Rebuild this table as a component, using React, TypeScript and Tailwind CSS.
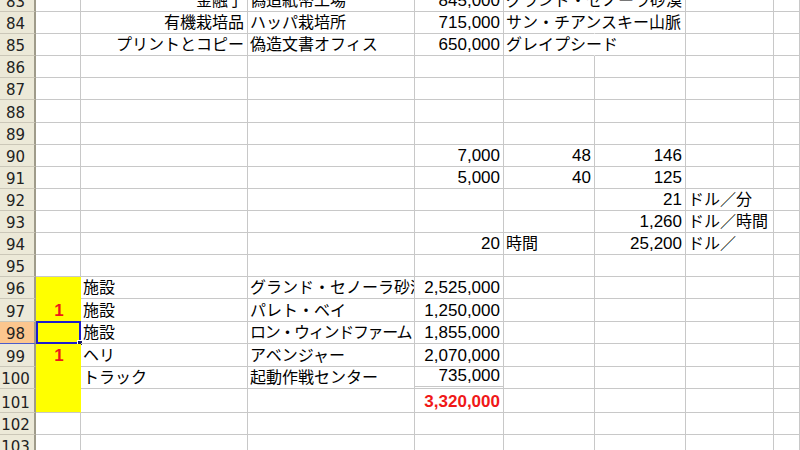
import clsx from "clsx";

// Excel 2003-style sheet, rows 83–103. Cells bottom-aligned like Excel,
// long text spills into the next empty cell, fills hide the gridlines.
type Cell = { t: string; r?: boolean; num?: boolean; cls?: string; spill?: boolean; clip?: boolean };
type Row = { n: number; h: string; cells: Partial<Record<ColKey, Cell>> };
type ColKey = "B" | "C" | "D" | "E" | "F" | "G" | "H" | "I";

const COLS: { key: ColKey; w: string }[] = [
  { key: "B", w: "w-[45px]" },
  { key: "C", w: "w-[167px]" },
  { key: "D", w: "w-[167px]" },
  { key: "E", w: "w-[89px]" },
  { key: "F", w: "w-[91px]" },
  { key: "G", w: "w-[91px]" },
  { key: "H", w: "w-[88px]" },
  { key: "I", w: "flex-1" },
];

const txt = (t: string, extra: Partial<Cell> = {}): Cell => ({ t, ...extra });
const num = (t: string, extra: Partial<Cell> = {}): Cell => ({ t, r: true, num: true, ...extra });

const YELLOW = new Set([96, 97, 98, 99, 100, 101]);

const ROWS: Row[] = [
  { n: 83, h: "h-[22px]", cells: { C: txt("金融了", { r: true }), D: txt("偽造紙幣工場"), E: num("845,000"), F: txt("グランド・セノーラ砂漠", { spill: true }) } },
  { n: 84, h: "h-[22px]", cells: { C: txt("有機栽培品", { r: true }), D: txt("ハッパ栽培所"), E: num("715,000"), F: txt("サン・チアンスキー山脈", { spill: true }) } },
  { n: 85, h: "h-[22px]", cells: { C: txt("プリントとコピー", { r: true }), D: txt("偽造文書オフィス"), E: num("650,000"), F: txt("グレイプシード", { spill: true }) } },
  { n: 86, h: "h-[22px]", cells: {} },
  { n: 87, h: "h-[22px]", cells: {} },
  { n: 88, h: "h-[23px]", cells: {} },
  { n: 89, h: "h-[22px]", cells: {} },
  { n: 90, h: "h-[22px]", cells: { E: num("7,000"), F: num("48"), G: num("146") } },
  { n: 91, h: "h-[22px]", cells: { E: num("5,000"), F: num("40"), G: num("125") } },
  { n: 92, h: "h-[22px]", cells: { G: num("21"), H: txt("ドル／分") } },
  { n: 93, h: "h-[22px]", cells: { G: num("1,260"), H: txt("ドル／時間") } },
  { n: 94, h: "h-[22px]", cells: { E: num("20"), F: txt("時間"), G: num("25,200"), H: txt("ドル／") } },
  { n: 95, h: "h-[22px]", cells: {} },
  { n: 96, h: "h-[22px]", cells: { C: txt("施設"), D: txt("グランド・セノーラ砂漠", { clip: true }), E: num("2,525,000") } },
  { n: 97, h: "h-[23px]", cells: { B: num("1", { r: false, cls: "justify-center font-bold text-[#f01818]" }), C: txt("施設"), D: txt("パレト・ベイ"), E: num("1,250,000") } },
  { n: 98, h: "h-[22px]", cells: { C: txt("施設"), D: txt("ロン・ウィンドファーム", { clip: true, cls: "tracking-[-1.3px]" }), E: num("1,855,000") } },
  { n: 99, h: "h-[23px]", cells: { B: num("1", { r: false, cls: "justify-center font-bold text-[#f01818]" }), C: txt("ヘリ"), D: txt("アベンジャー"), E: num("2,070,000") } },
  { n: 100, h: "h-[22px]", cells: { C: txt("トラック"), D: txt("起動作戦センター"), E: num("735,000", { cls: "border-b-[3px] border-b-[#222] border-double" }) } },
  { n: 101, h: "h-[24px]", cells: { E: num("3,320,000", { cls: "font-bold text-[#f01818]" }) } },
  { n: 102, h: "h-[22px]", cells: {} },
  { n: 103, h: "h-[22px]", cells: {} },
];

function SheetRow({ row }: { row: Row }) {
  const selected = row.n === 98;
  return (
    <div className={clsx("flex", row.h)}>
      <div
        className={clsx(
          "flex w-[36px] shrink-0 items-end justify-center border-r-2 border-b pr-[3px] pb-[1px] font-['DejaVu_Sans',sans-serif] text-[15px] leading-none text-[#222]",
          selected ? "border-r-[#9f9b8a] border-b-[#4a5ccc] bg-[#fcc68e]" : "border-r-[#9f9b8a] border-b-[#cbc7b8] bg-[#ece9d8]"
        )}
      >
        {row.n}
      </div>
      {COLS.map((c) => {
        const cell = row.cells[c.key];
        const yellow = c.key === "B" && YELLOW.has(row.n);
        return (
          <div
            key={c.key}
            className={clsx(
              "relative flex shrink-0 items-end border-r border-b pb-[2px] leading-none whitespace-nowrap",
              c.w,
              yellow ? "bg-[#ffff00] border-r-[#ffff00]" : "border-r-[#c8c8c8]",
              yellow && row.n !== 101 ? "border-b-[#ffff00]" : "border-b-[#c8c8c8]",
              cell?.spill && "border-r-transparent",
              cell?.clip && "overflow-hidden",
              cell?.r ? "justify-end pr-[3px]" : "pl-[2px]",
              cell?.num ? "text-[17px]" : "text-[16px]",
              cell?.cls
            )}
          >
            {cell?.t}
            {selected && c.key === "B" && (
              <div className="absolute -top-[1px] left-0 -right-[1px] -bottom-[1px] border-2 border-[#1c1ccc]">
                <div className="absolute -right-[4px] -bottom-[4px] h-[6px] w-[6px] border border-white bg-[#14166a]" />
              </div>
            )}
          </div>
        );
      })}
    </div>
  );
}

export default function App() {
  return (
    <div className="h-[450px] w-[800px] overflow-hidden bg-white font-['Liberation_Sans','Noto_Sans_CJK_JP',sans-serif] text-black">
      <div className="-mt-[10px] flex flex-col">
        {ROWS.map((r) => (
          <SheetRow key={r.n} row={r} />
        ))}
      </div>
    </div>
  );
}
